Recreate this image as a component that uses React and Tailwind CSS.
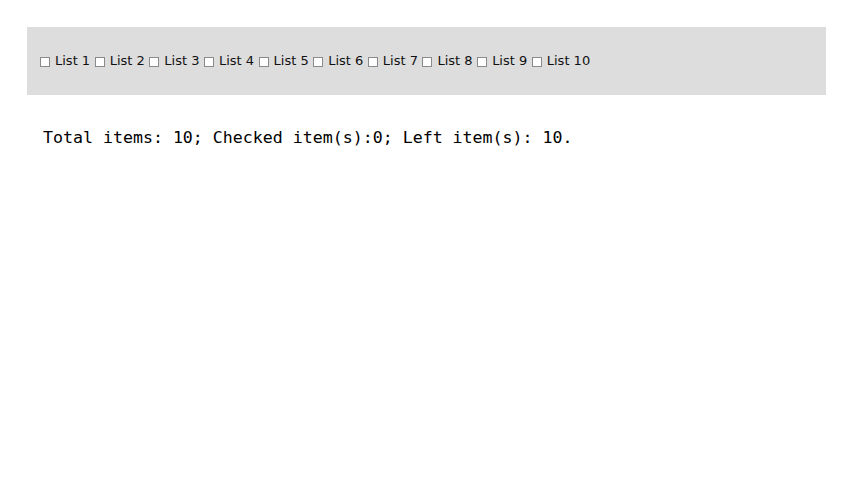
import React, { useState } from 'react';

const items = Array.from({ length: 10 }, (_, i) => `List ${i + 1}`);

export default function App() {
  const [checked, setChecked] = useState({});
  const count = Object.values(checked).filter(Boolean).length;

  return (
    <div className="p-[27px] bg-white min-h-[500px]">
      <div className="flex items-center h-[68px] pl-[13px] bg-[#dddddd] text-[13px] text-[#111] font-['DejaVu_Sans',sans-serif]">
        {items.map((label, i) => (
          <label key={label} className="flex items-center mr-[4.5px]">
            <input
              type="checkbox"
              checked={!!checked[i]}
              onChange={() => setChecked({ ...checked, [i]: !checked[i] })}
              className="appearance-none w-[10px] h-[10px] mt-[2px] mr-[5px] border border-[#8a8a8a] bg-white checked:bg-[#3b82f6]"
            />
            <span>{label}</span>
          </label>
        ))}
      </div>
      <p className="mt-[31px] pl-[16px] text-[16.6px] leading-6 text-black font-['DejaVu_Sans_Mono',monospace]">
        Total items: {items.length}; Checked item(s):{count}; Left item(s): {items.length - count}.
      </p>
    </div>
  );
}
